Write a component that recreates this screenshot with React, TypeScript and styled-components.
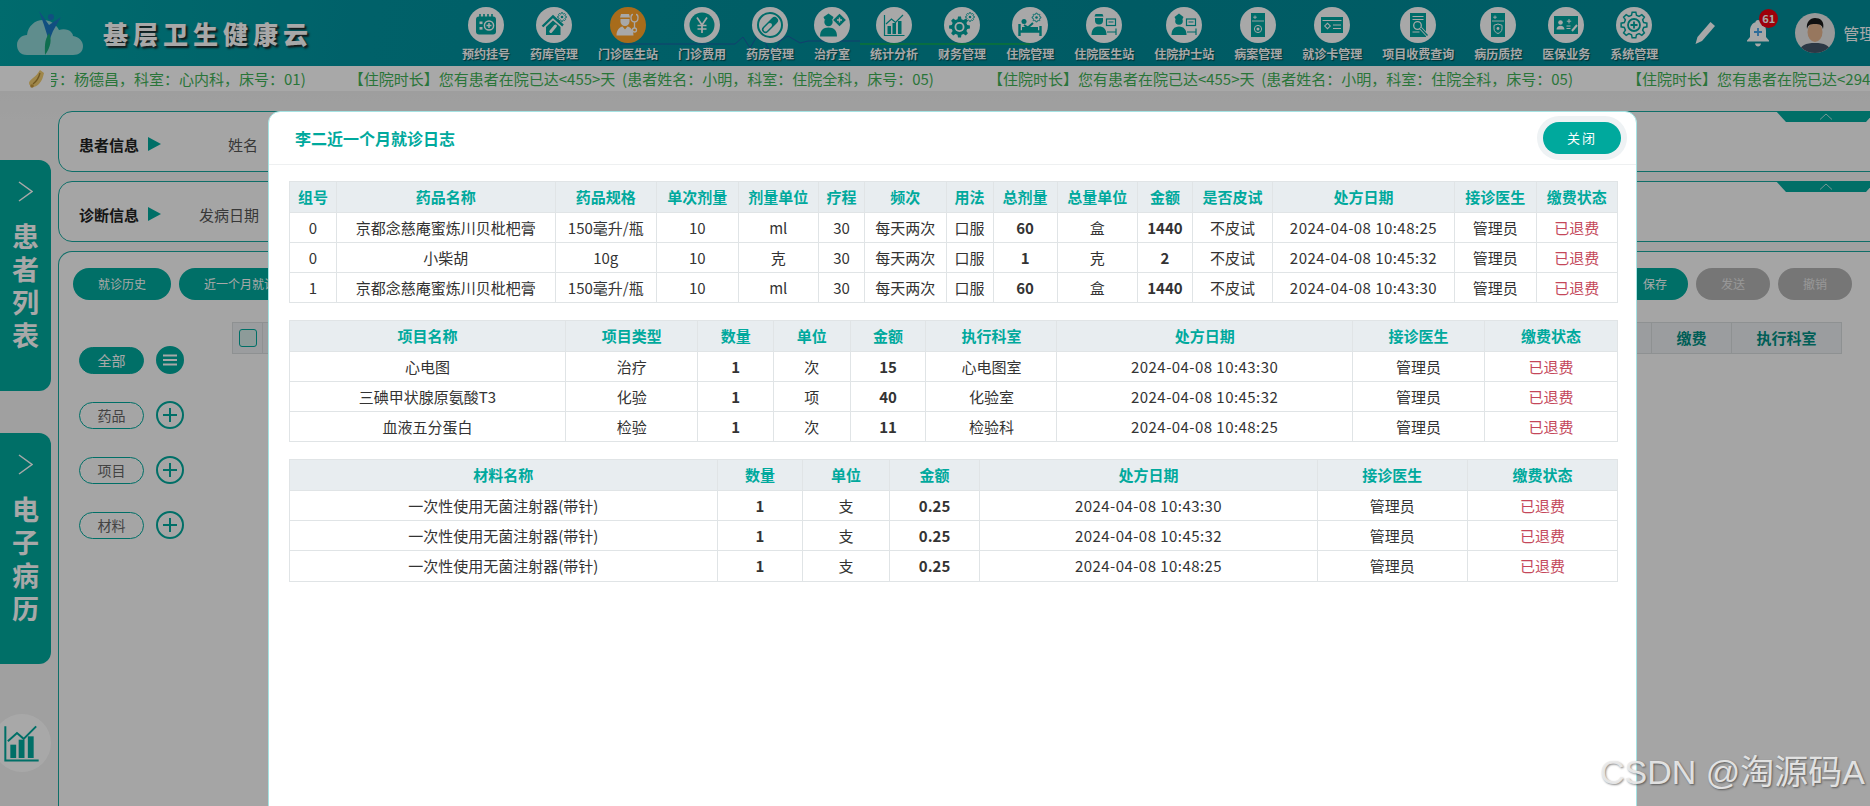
import React from 'react';
import styled, {createGlobalStyle} from 'styled-components';

const FONT = '"Noto Sans CJK SC", "Noto Sans", sans-serif';
const TEAL = '#00a99d';

const GlobalStyle = createGlobalStyle`
  html, body {
    margin: 0;
    padding: 0;
    background: #fff;
    font-family: ${FONT};
  }
  * {
    box-sizing: border-box;
  }
`;

// polygon points for a toothed wheel, the nav icons need it three times
const gearPoints = (cx: number, cy: number, outer: number, inner: number, teeth: number) => {
  const pts: string[] = [];
  const step = (Math.PI * 2) / teeth;
  for (let i = 0; i < teeth; i++) {
    const a = i * step;
    [
      [inner, a - step * 0.32],
      [outer, a - step * 0.18],
      [outer, a + step * 0.18],
      [inner, a + step * 0.32],
    ].forEach(([r, t]) => {
      pts.push(`${(cx + r * Math.cos(t)).toFixed(2)},${(cy + r * Math.sin(t)).toFixed(2)}`);
    });
  }
  return pts.join(' ');
};

const SmallGear = ({x, y}: {x: number; y: number}) => (
  <g>
    <polygon points={gearPoints(x, y, 4.4, 3.4, 8)} fill="none" stroke="currentColor" strokeWidth="0.9" />
    <circle cx={x} cy={y} r="1.3" fill="currentColor" />
  </g>
);

const CalendarGlyph = () => (
  <>
    <rect x="8" y="9.5" width="20" height="18" rx="3" fill="currentColor" />
    <path d="M12 7v4M16 7v4M20 7v4M24 7v4" stroke="currentColor" strokeWidth="1.6" />
    <rect x="11.5" y="14.5" width="3" height="2.6" fill="#fff" />
    <rect x="11.5" y="20" width="3" height="2.6" fill="#fff" />
    <circle cx="21" cy="18.5" r="4.6" fill="none" stroke="#fff" strokeWidth="1.5" />
    <path d="M21 16v5M18.5 18.5h5" stroke="#fff" strokeWidth="1.5" />
  </>
);

const HomeGlyph = () => (
  <>
    <path d="M6.5 19.5L17 9.5l10 9" fill="none" stroke="currentColor" strokeWidth="2.4" />
    <path d="M10 20l7-6.5 7.5 6.5v8H10z" fill="currentColor" />
    <path d="M14.8 24.5l4.6-5.500" stroke="#fff" strokeWidth="3" strokeLinecap="round" />
    <SmallGear x={26} y={10} />
  </>
);

const DoctorGlyph = () => (
  <>
    <path d="M10 10.5l1-3.5h8l1 3.5z" fill="currentColor" />
    <path d="M10.5 12h9v2.5a4.5 4.5 0 0 1-9 0z" fill="currentColor" />
    <path d="M6.500 28.500c0-6 3.500-8.500 6-9l2.500 3 2.500-3c2.500.5 6 3 6 9z" fill="currentColor" />
    <path
      d="M23 7.500c-1.200 0-2 1-2 3 0 3 1.800 4.500 3.500 4.500s3.500-1.500 3.500-4.500c0-2-.8-3-2-3M24.500 15v6"
      fill="none"
      stroke="currentColor"
      strokeWidth="1.3"
    />
    <circle cx="24.500" cy="23" r="2" fill="none" stroke="currentColor" strokeWidth="1.3" />
  </>
);

const YenGlyph = () => (
  <>
    <circle cx="18" cy="18" r="12.500" fill="currentColor" />
    <path d="M13 10.500l5 7.500 5-7.500M18 18v8M13.500 18.500h9M13.500 22h9" fill="none" stroke="#fff" strokeWidth="1.7" />
  </>
);

const PillGlyph = () => (
  <>
    <circle cx="18" cy="18" r="12" fill="none" stroke="currentColor" strokeWidth="2" />
    <path d="M13.500 22.500l9-9" stroke="currentColor" strokeWidth="7" strokeLinecap="round" />
    <path d="M13.500 22.500l4.500-4.500" stroke="#fff" strokeWidth="4" strokeLinecap="round" />
  </>
);

const NurseGlyph = () => (
  <>
    <path d="M9.500 10l5-3.500 5 3.500-1 2.500h-8z" fill="currentColor" />
    <circle cx="14.500" cy="15" r="4.200" fill="currentColor" />
    <path d="M6 29.500c0-6 3-9 8.500-9s8.500 3 8.500 9z" fill="currentColor" />
    <rect x="21" y="8.500" width="9" height="9" transform="rotate(45 25.500 13)" fill="currentColor" />
    <path d="M25.500 10.500v5M23 13h5" stroke="#fff" strokeWidth="1.4" />
  </>
);

const ChartGlyph = () => (
  <>
    <path d="M8.500 8v20.500H28.500" fill="none" stroke="currentColor" strokeWidth="1.200" />
    <rect x="11.500" y="19" width="3.500" height="8" fill="currentColor" />
    <rect x="16.500" y="16" width="3.500" height="11" fill="currentColor" />
    <rect x="22" y="14" width="3.500" height="13" fill="currentColor" />
    <path d="M10 17l5.500-5 4 3.500L27 8" fill="none" stroke="currentColor" strokeWidth="1.200" />
  </>
);

const FinanceGlyph = () => (
  <>
    <polygon points={gearPoints(15.5, 20, 10.5, 8, 8)} fill="currentColor" />
    <circle cx="15.500" cy="20" r="5" fill="#fff" />
    <circle cx="15.500" cy="20" r="3.200" fill="currentColor" />
    <SmallGear x={26} y={10} />
  </>
);

const BedGlyph = () => (
  <>
    <circle cx="12" cy="14.500" r="2.500" fill="currentColor" />
    <path d="M12 18l4 2.500 5-4.500" fill="none" stroke="currentColor" strokeWidth="2" />
    <path d="M7.500 17v12M28.500 19v10M7.500 24.500h21" stroke="currentColor" strokeWidth="2.400" fill="none" />
    <rect x="10" y="20" width="16" height="4" fill="currentColor" />
    <SmallGear x={24.5} y={10.5} />
  </>
);

const WardDoctorGlyph = () => (
  <>
    <path d="M8.500 9.500l1-2.500h7l1 2.500z" fill="currentColor" />
    <path d="M9 11h8v2.500a4 4 0 0 1-8 0z" fill="currentColor" />
    <path d="M5.500 28c0-6 3-8.500 7.500-8.500s7.500 2.500 7.500 8.500z" fill="currentColor" />
    <rect x="20.500" y="12" width="9" height="6.500" fill="none" stroke="currentColor" strokeWidth="1.200" />
    <path d="M22.500 15h5M21 25h9M30 21.500V28" stroke="currentColor" strokeWidth="1.200" />
  </>
);

const WardNurseGlyph = () => (
  <>
    <path d="M8.500 10l4.500-3.500 4.500 3.500-1 2h-7z" fill="currentColor" />
    <circle cx="13" cy="14" r="3.800" fill="currentColor" />
    <path d="M5.500 28c0-5 2.500-8.500 7.500-8.500s7.500 3.500 7.500 8.500z" fill="currentColor" />
    <rect x="20.500" y="12" width="9" height="6.500" fill="none" stroke="currentColor" strokeWidth="1.200" />
    <path d="M22.500 15h5M21 25h9M30 21.500V28" stroke="currentColor" strokeWidth="1.200" />
  </>
);

const RecordGlyph = () => (
  <>
    <rect x="11" y="6" width="14" height="24" fill="currentColor" />
    <path d="M15 8.500v3.500M13.200 10.200h3.600M12 14h12" stroke="#fff" strokeWidth="0.9" />
    <circle cx="18" cy="22" r="3.600" fill="none" stroke="#fff" strokeWidth="1" />
    <circle cx="18" cy="22" r="1.500" fill="#fff" />
  </>
);

const CardGlyph = () => (
  <>
    <rect x="7" y="10" width="22" height="16" fill="currentColor" />
    <path d="M8.500 13.500h19M19 18h8M19 21.500h8" stroke="#fff" strokeWidth="1" />
    <rect x="11.500" y="17" width="4" height="4" transform="rotate(45 13.500 19)" fill="none" stroke="#fff" strokeWidth="1" />
  </>
);

const SearchDocGlyph = () => (
  <>
    <rect x="10" y="6" width="16" height="24" fill="currentColor" />
    <path d="M12.500 9.500h11M12.500 12.500h11M12.500 25h7" stroke="#fff" strokeWidth="1" />
    <circle cx="17.500" cy="18.500" r="3.800" fill="none" stroke="#fff" strokeWidth="1.300" />
    <path d="M20.500 21l7 7.500" stroke="#fff" strokeWidth="3.200" />
    <path d="M20.500 21l7 7.500" stroke="currentColor" strokeWidth="1.400" />
  </>
);

const ShieldDocGlyph = () => (
  <>
    <rect x="11" y="6" width="14" height="24" fill="currentColor" />
    <path d="M15 8.500v3.500M13.200 10.200h3.600M12 14h12" stroke="#fff" strokeWidth="0.9" />
    <path d="M18 17l4 1.300v3.500c0 2.500-2 4-4 4.700-2-.7-4-2.200-4-4.700v-3.500z" fill="none" stroke="#fff" strokeWidth="1" />
    <circle cx="18" cy="21.500" r="1.400" fill="#fff" />
  </>
);

const InsuranceGlyph = () => (
  <>
    <rect x="6" y="9" width="24" height="18" fill="currentColor" />
    <circle cx="12.500" cy="15.500" r="2.300" fill="#fff" />
    <path d="M8.500 22.500c0-2.500 1.800-3.800 4-3.800s4 1.300 4 3.800z" fill="#fff" />
    <path d="M21 12v4.500M18.800 14.200h4.400M18.500 19h4M18.500 21.500h4" stroke="#fff" strokeWidth="1" />
    <path d="M24 24l5-6" stroke="#fff" strokeWidth="2" />
  </>
);

const SystemGlyph = () => (
  <>
    <polygon points={gearPoints(18, 18, 13, 10, 8)} fill="none" stroke="currentColor" strokeWidth="1.500" />
    <circle cx="18" cy="18" r="6" fill="none" stroke="currentColor" strokeWidth="1.800" />
    <path d="M18 14.500v7M14.500 18h7" stroke="currentColor" strokeWidth="1.800" />
  </>
);

const NAV_ITEMS = [
  {label: '预约挂号', glyph: CalendarGlyph},
  {label: '药库管理', glyph: HomeGlyph},
  {label: '门诊医生站', glyph: DoctorGlyph, active: true},
  {label: '门诊费用', glyph: YenGlyph},
  {label: '药房管理', glyph: PillGlyph},
  {label: '治疗室', glyph: NurseGlyph},
  {label: '统计分析', glyph: ChartGlyph},
  {label: '财务管理', glyph: FinanceGlyph},
  {label: '住院管理', glyph: BedGlyph},
  {label: '住院医生站', glyph: WardDoctorGlyph},
  {label: '住院护士站', glyph: WardNurseGlyph},
  {label: '病案管理', glyph: RecordGlyph},
  {label: '就诊卡管理', glyph: CardGlyph},
  {label: '项目收费查询', glyph: SearchDocGlyph},
  {label: '病历质控', glyph: ShieldDocGlyph},
  {label: '医保业务', glyph: InsuranceGlyph},
  {label: '系统管理', glyph: SystemGlyph},
];

const TICKER_ITEMS = [
  '【住院时长】您有患者在院已达<455>天  (患者姓名：小明，科室：住院全科，床号：05)',
  '【住院时长】您有患者在院已达<455>天  (患者姓名：小明，科室：住院全科，床号：05)',
  '【住院时长】您有患者在院已达<294>天  (患者姓名：杨德昌，科室：心内科，床号：01)',
];

interface Column {
  title: string;
  width: number;
  bold?: boolean;
  status?: boolean;
  date?: boolean;
}

const DRUG_COLUMNS: Column[] = [
  {title: '组号', width: 47},
  {title: '药品名称', width: 218.5},
  {title: '药品规格', width: 101.5},
  {title: '单次剂量', width: 81.6},
  {title: '剂量单位', width: 80.4},
  {title: '疗程', width: 46},
  {title: '频次', width: 81.6},
  {title: '用法', width: 47},
  {title: '总剂量', width: 64, bold: true},
  {title: '总量单位', width: 80.4},
  {title: '金额', width: 55, bold: true},
  {title: '是否皮试', width: 80},
  {title: '处方日期', width: 182, date: true},
  {title: '接诊医生', width: 81.6},
  {title: '缴费状态', width: 81.4, status: true},
];

const CITY_DRUG = '京都念慈庵蜜炼川贝枇杷膏';
const DRUG_ROWS = [
  ['0', CITY_DRUG, '150毫升/瓶', '10', 'ml', '30', '每天两次', '口服', '60', '盒', '1440', '不皮试', '2024-04-08 10:48:25', '管理员', '已退费'],
  ['0', '小柴胡', '10g', '10', '克', '30', '每天两次', '口服', '1', '克', '2', '不皮试', '2024-04-08 10:45:32', '管理员', '已退费'],
  ['1', CITY_DRUG, '150毫升/瓶', '10', 'ml', '30', '每天两次', '口服', '60', '盒', '1440', '不皮试', '2024-04-08 10:43:30', '管理员', '已退费'],
];

const ITEM_COLUMNS: Column[] = [
  {title: '项目名称', width: 276},
  {title: '项目类型', width: 132.4},
  {title: '数量', width: 75.6, bold: true},
  {title: '单位', width: 76.6},
  {title: '金额', width: 75.9, bold: true},
  {title: '执行科室', width: 131},
  {title: '处方日期', width: 295.4, date: true},
  {title: '接诊医生', width: 132.5},
  {title: '缴费状态', width: 132.5, status: true},
];

const ITEM_ROWS = [
  ['心电图', '治疗', '1', '次', '15', '心电图室', '2024-04-08 10:43:30', '管理员', '已退费'],
  ['三碘甲状腺原氨酸T3', '化验', '1', '项', '40', '化验室', '2024-04-08 10:45:32', '管理员', '已退费'],
  ['血液五分蛋白', '检验', '1', '次', '11', '检验科', '2024-04-08 10:48:25', '管理员', '已退费'],
];

const MATERIAL_COLUMNS: Column[] = [
  {title: '材料名称', width: 427.7},
  {title: '数量', width: 85.7, bold: true},
  {title: '单位', width: 86.3},
  {title: '金额', width: 90.8, bold: true},
  {title: '处方日期', width: 337.1, date: true},
  {title: '接诊医生', width: 150.4},
  {title: '缴费状态', width: 149.9, status: true},
];

const SYRINGE = '一次性使用无菌注射器(带针)';
const MATERIAL_ROWS = [
  [SYRINGE, '1', '支', '0.25', '2024-04-08 10:43:30', '管理员', '已退费'],
  [SYRINGE, '1', '支', '0.25', '2024-04-08 10:45:32', '管理员', '已退费'],
  [SYRINGE, '1', '支', '0.25', '2024-04-08 10:48:25', '管理员', '已退费'],
];

const FILTERS = [
  {label: '全部', solid: true},
  {label: '药品'},
  {label: '项目'},
  {label: '材料'},
];

const DataTable = ({columns, rows}: {columns: Column[]; rows: string[][]}) => (
  <Grid>
    <colgroup>
      {columns.map((col) => (
        <col key={col.title} width={col.width} />
      ))}
    </colgroup>
    <thead>
      <tr>
        {columns.map((col) => (
          <HeadCell key={col.title}>{col.title}</HeadCell>
        ))}
      </tr>
    </thead>
    <tbody>
      {rows.map((row, r) => (
        <tr key={r}>
          {row.map((text, c) => (
            <BodyCell key={c} $bold={columns[c].bold} $status={columns[c].status} $date={columns[c].date}>
              {text}
            </BodyCell>
          ))}
        </tr>
      ))}
    </tbody>
  </Grid>
);

const Chevron = () => (
  <TabChevron viewBox="0 0 15 21">
    <path d="M1 1l13 9.500L1 20" fill="none" stroke="currentColor" strokeWidth="1.500" />
  </TabChevron>
);

const CollapseTab = () => (
  <Notch>
    <svg width="14" height="7" viewBox="0 0 14 7">
      <path d="M1 6.500L7 1l6 5.500" fill="none" stroke="#fff" strokeWidth="1" opacity="0.7" />
    </svg>
  </Notch>
);

export default function App() {
  return (
    <Page>
      <GlobalStyle />
      <Header>
        <HeaderTrace viewBox="0 0 1870 66">
          <path d="M620 44H735l8-7 7 11 10-17 12 26 8-16 8-5 12 7 8-2H860" fill="none" stroke="#1d5fa8" strokeWidth="1" />
          <path d="M860 44H1030" stroke="#10b050" strokeWidth="1.500" />
        </HeaderTrace>
        <Logo width="66" height="44" viewBox="0 0 66 44">
          <path
            d="M10 44C3 44 0 39 0 34c0-6 5-10 10-10 1-9 8-15 16-15 7 0 13 4 16 10 3-1 6-1 9 0 3 1 5 4 5 6 6 1 10 5 10 10 0 6-4 9-10 9z"
            fill="#b5e4e4"
            opacity="0.8"
          />
          <path d="M22 0l10 14L44 6 36 20 32 30 27 14z" fill="#1a78c2" />
          <circle cx="34" cy="6" r="3" fill="#1a78c2" />
          <path d="M32 22c3 6 2 14-4 22 0-8-1-14 4-22z" fill="#18a878" />
        </Logo>
        <Brand>基层卫生健康云</Brand>
        <Nav>
          {NAV_ITEMS.map(({label, glyph: Glyph, active}) => (
            <NavItem key={label}>
              <NavIcon $active={active}>
                <svg width="36" height="36" viewBox="0 0 36 36">
                  <Glyph />
                </svg>
              </NavIcon>
              <NavLabel>{label}</NavLabel>
            </NavItem>
          ))}
        </Nav>
        <UserArea>
          <svg width="22" height="24" viewBox="0 0 22 24">
            <path d="M16.500 1l4.500 4-13 15-6.500 3 2-7z" fill="#fff" />
          </svg>
          <BellWrap>
            <svg width="24" height="30" viewBox="0 0 24 30">
              <path d="M12 2c1.500 0 2.500 1 2.500 2.200C18.500 5.500 20 9 20 13v6l3 3.500v1H1v-1L4 19v-6c0-4 1.500-7.500 5.500-8.800C9.500 3 10.500 2 12 2z" fill="#fff" />
              <path d="M9 25.500h6c-.3 1.800-1.500 3-3 3s-2.700-1.200-3-3z" fill="#fff" />
              <path d="M12 10v8M8 14h8" stroke="#45a4ea" strokeWidth="1.800" />
            </svg>
            <Badge>61</Badge>
          </BellWrap>
          <Avatar viewBox="0 0 40 40">
            <rect width="40" height="40" fill="#e8e8e8" />
            <path d="M4 40c1-8 7-10 16-10s15 2 16 10z" fill="#43556a" />
            <ellipse cx="20" cy="19" rx="7.500" ry="10" fill="#e6b58f" />
            <path d="M12 16c-1-7 3-11 8-11s10 3 8 11c-1-4-3-5-8-5s-7 1-8 5z" fill="#1b1b1b" />
          </Avatar>
          <UserName>管理员</UserName>
        </UserArea>
      </Header>

      <Ticker>
        <TickerIcon width="17" height="20" viewBox="0 0 17 20">
          <path d="M12 1l4 3c-1 4-2 8-5 11-2 2-4 3-6 3-2 0-4-2-4-4 0-2 2-3 4-5 3-2 5-5 7-8z" fill="#f2cd72" />
          <path d="M12 4c-1 4-3 8-7 11" stroke="#a98434" strokeWidth="1.300" fill="none" />
          <circle cx="4" cy="17" r="1.800" fill="#c99a3e" />
        </TickerIcon>
        <TickerClip>
          <TickerTrack>
            <TickerFirst>号：杨德昌，科室：心内科，床号：01)</TickerFirst>
            {TICKER_ITEMS.map((text, i) => (
              <TickerText key={i}>{text}</TickerText>
            ))}
          </TickerTrack>
        </TickerClip>
      </Ticker>

      <Main>
        <Sidebar>
          <SideTab>
            <Chevron />
            <SideTabText>患者列表</SideTabText>
          </SideTab>
          <SideTab>
            <Chevron />
            <SideTabText>电子病历</SideTabText>
          </SideTab>
          <StatsButton>
            <svg width="40" height="40" viewBox="7 6 23 24">
              <ChartGlyph />
            </svg>
          </StatsButton>
        </Sidebar>
        <Content>
          <InfoCard>
            <InfoTitle>患者信息</InfoTitle>
            <InfoArrow />
            <InfoField>姓名</InfoField>
            <CollapseTab />
          </InfoCard>
          <InfoCard>
            <InfoTitle>诊断信息</InfoTitle>
            <InfoArrow />
            <InfoFieldNear>发病日期</InfoFieldNear>
            <CollapseTab />
          </InfoCard>
          <WorkCard>
            <ActionRow>
              <ActionGroup>
                <ActionButton $w={98}>就诊历史</ActionButton>
                <ActionButton $w={146}>近一个月就诊日志</ActionButton>
              </ActionGroup>
              <ActionGroup>
                <ActionButton $w={66}>保存</ActionButton>
                <ActionButton $w={74} $muted>发送</ActionButton>
                <ActionButton $w={74} $muted>撤销</ActionButton>
              </ActionGroup>
            </ActionRow>
            <WorkBody>
              <FilterList>
                {FILTERS.map((f) => (
                  <FilterRow key={f.label}>
                    <FilterPill $solid={f.solid}>{f.label}</FilterPill>
                    <FilterRound $solid={f.solid}>
                      <svg width="18" height="18" viewBox="0 0 18 18">
                        <path
                          d={f.solid ? 'M2 4.500h14M2 9h14M2 13.500h14' : 'M9 2v14M2 9h14'}
                          stroke={f.solid ? '#fff' : TEAL}
                          strokeWidth="2"
                        />
                      </svg>
                    </FilterRound>
                  </FilterRow>
                ))}
              </FilterList>
              <OrderHead>
                <CheckCell>
                  <CheckBox />
                </CheckCell>
                <OrderSpacer />
                <OrderCell $w={80}>缴费</OrderCell>
                <OrderCell $w={110}>执行科室</OrderCell>
              </OrderHead>
            </WorkBody>
          </WorkCard>
        </Content>
      </Main>

      <Overlay>
        <Modal>
          <ModalHead>
            <ModalTitle>李二近一个月就诊日志</ModalTitle>
            <CloseButton>关闭</CloseButton>
          </ModalHead>
          <ModalBody>
            <DataTable columns={DRUG_COLUMNS} rows={DRUG_ROWS} />
            <DataTable columns={ITEM_COLUMNS} rows={ITEM_ROWS} />
            <DataTable columns={MATERIAL_COLUMNS} rows={MATERIAL_ROWS} />
          </ModalBody>
        </Modal>
      </Overlay>
      <Watermark>CSDN @淘源码A</Watermark>
    </Page>
  );
}

const Page = styled.div`
  position: relative;
  width: 1870px;
  height: 806px;
  overflow: hidden;
  display: flex;
  flex-direction: column;
  background: linear-gradient(#e6e6e6, #f3f3f3 120px);
`;

const Header = styled.header`
  position: relative;
  flex: none;
  height: 66px;
  padding-left: 17px;
  display: flex;
  align-items: center;
  background: linear-gradient(100deg, #00a3a6 0%, #0093a0 20%, #008b98 60%, #008e9a 100%);
`;

const HeaderTrace = styled.svg`
  position: absolute;
  inset: 0;
  width: 1870px;
  height: 66px;
`;

const Logo = styled.svg`
  position: relative;
  flex: none;
`;

const Brand = styled.div`
  position: relative;
  flex: none;
  margin-left: 20px;
  width: 210px;
  font-size: 25px;
  font-weight: 900;
  letter-spacing: 5px;
  line-height: 30px;
  white-space: nowrap;
  color: #fff;
  text-shadow: 2px 2px 2px #222;
`;

const Nav = styled.nav`
  position: relative;
  flex: none;
  margin-left: 149px;
  align-self: flex-start;
  padding-top: 7px;
  display: flex;
  gap: 20px;
`;

const NavItem = styled.div`
  display: flex;
  flex-direction: column;
  align-items: center;
`;

const NavIcon = styled.div<{$active?: boolean}>`
  width: 36px;
  height: 36px;
  border-radius: 50%;
  background: ${(p) => (p.$active ? '#ffa52a' : '#fff')};
  color: ${(p) => (p.$active ? '#fff' : '#00a4a0')};
  svg {
    display: block;
  }
`;

const NavLabel = styled.div`
  margin-top: 5px;
  font-size: 12px;
  line-height: 12px;
  font-weight: 700;
  white-space: nowrap;
  color: #fff;
  text-shadow: 1px 1px 1px rgba(0, 0, 0, 0.5);
`;

const UserArea = styled.div`
  position: relative;
  flex: none;
  margin-left: 36px;
  display: flex;
  align-items: center;
  gap: 30px;
`;

const BellWrap = styled.div`
  position: relative;
  width: 24px;
  height: 30px;
  margin-right: -5px;
`;

const Badge = styled.span`
  position: absolute;
  top: -9px;
  left: 13px;
  width: 19px;
  height: 19px;
  border-radius: 50%;
  background: #f00010;
  color: #fff;
  font-size: 11px;
  font-weight: 700;
  line-height: 19px;
  text-align: center;
`;

const Avatar = styled.svg`
  flex: none;
  width: 40px;
  height: 40px;
  border-radius: 50%;
`;

const UserName = styled.span`
  margin-left: -22px;
  font-size: 16px;
  color: #fff;
  white-space: nowrap;
`;

const Ticker = styled.div`
  flex: none;
  height: 25px;
  padding-left: 28px;
  display: flex;
  align-items: center;
  background: #fff;
`;

const TickerIcon = styled.svg`
  flex: none;
  margin-right: 6px;
`;

const TickerClip = styled.div`
  flex: 1;
  min-width: 0;
  overflow: hidden;
`;

const TickerTrack = styled.div`
  display: flex;
  gap: 54px;
  font-size: 15px;
  line-height: 25px;
  white-space: pre;
  color: #3fb257;
`;

const TickerFirst = styled.span`
  margin-left: -7px;
  margin-right: -11px;
`;

const TickerText = styled.span``;

const Main = styled.main`
  flex: 1;
  min-height: 0;
  display: flex;
`;

const Sidebar = styled.aside`
  flex: none;
  width: 51px;
  padding-top: 69px;
  display: flex;
  flex-direction: column;
  gap: 42px;
`;

const SideTab = styled.div`
  height: 231px;
  padding-top: 21px;
  display: flex;
  flex-direction: column;
  align-items: center;
  border-radius: 0 12px 12px 0;
  background: ${TEAL};
  color: #fff;
`;

const TabChevron = styled.svg`
  flex: none;
  width: 15px;
  height: 21px;
`;

const SideTabText = styled.div`
  margin-top: 17px;
  width: 27px;
  font-size: 27px;
  line-height: 33px;
  font-weight: 700;
`;

const StatsButton = styled.div`
  margin: 8px 0 0 -7px;
  width: 58px;
  height: 58px;
  border-radius: 50%;
  background: #fff;
  color: ${TEAL};
  display: flex;
  align-items: center;
  justify-content: center;
`;

const Content = styled.div`
  flex: none;
  width: 1832px;
  margin-left: 7px;
  padding-top: 20px;
  display: flex;
  flex-direction: column;
  gap: 9px;
`;

const InfoCard = styled.section`
  position: relative;
  flex: none;
  height: 61px;
  padding: 5px 0 0 20px;
  display: flex;
  align-items: center;
  border: 1px solid #17a89e;
  border-radius: 14px;
  background: #fbfbfb;
`;

const InfoTitle = styled.div`
  font-size: 15px;
  font-weight: 700;
  color: #222;
`;

const InfoArrow = styled.span`
  margin-left: 9px;
  width: 0;
  height: 0;
  border-left: 13px solid ${TEAL};
  border-top: 7px solid transparent;
  border-bottom: 7px solid transparent;
`;

const InfoField = styled.div`
  margin-left: 67px;
  font-size: 15px;
  color: #555;
`;

const InfoFieldNear = styled(InfoField)`
  margin-left: 38px;
`;

const Notch = styled.div`
  position: absolute;
  top: -1px;
  left: 1717px;
  width: 100px;
  height: 11px;
  display: flex;
  align-items: flex-start;
  justify-content: center;
  padding-top: 2px;
  background: ${TEAL};
  clip-path: polygon(0 0, 100% 0, calc(100% - 10px) 100%, 10px 100%);
`;

const WorkCard = styled.section`
  flex: 1;
  min-height: 0;
  padding: 16px 37px 0 14px;
  border: 1px solid #17a89e;
  border-bottom: 0;
  border-radius: 14px 14px 0 0;
  background: #fbfbfb;
`;

const ActionRow = styled.div`
  display: flex;
  justify-content: space-between;
`;

const ActionGroup = styled.div`
  display: flex;
  gap: 8px;
`;

const ActionButton = styled.div<{$w: number; $muted?: boolean}>`
  width: ${(p) => p.$w}px;
  height: 32px;
  border-radius: 16px;
  background: ${(p) => (p.$muted ? '#b4b4b4' : TEAL)};
  color: ${(p) => (p.$muted ? '#e6e6e6' : '#fff')};
  font-size: 12px;
  line-height: 32px;
  text-align: center;
`;

const WorkBody = styled.div`
  display: flex;
  align-items: flex-start;
`;

const FilterList = styled.div`
  flex: none;
  width: 159px;
  margin-top: 46px;
  padding-left: 6px;
  display: flex;
  flex-direction: column;
  gap: 27px;
`;

const FilterRow = styled.div`
  display: flex;
  align-items: center;
  gap: 12px;
`;

const FilterPill = styled.div<{$solid?: boolean}>`
  width: 65px;
  height: 27px;
  border-radius: 14px;
  border: 1px solid ${TEAL};
  background: ${(p) => (p.$solid ? TEAL : 'transparent')};
  color: ${(p) => (p.$solid ? '#fff' : '#666')};
  font-size: 14px;
  line-height: 25px;
  text-align: center;
`;

const FilterRound = styled.div<{$solid?: boolean}>`
  width: 28px;
  height: 28px;
  border-radius: 50%;
  border: 2px solid ${TEAL};
  background: ${(p) => (p.$solid ? TEAL : 'transparent')};
  display: flex;
  align-items: center;
  justify-content: center;
`;

const OrderHead = styled.div`
  flex: 1;
  margin: 22px 10px 0 0;
  height: 32px;
  display: flex;
  border: 1px solid #d8dcde;
  background: #eceff1;
`;

const CheckCell = styled.div`
  flex: none;
  width: 30px;
  display: flex;
  align-items: center;
  justify-content: center;
  border-right: 1px solid #d8dcde;
`;

const CheckBox = styled.span`
  width: 18px;
  height: 18px;
  border: 1px solid ${TEAL};
  border-radius: 3px;
  background: #d6ece8;
`;

const OrderSpacer = styled.div`
  flex: 1;
`;

const OrderCell = styled.div<{$w: number}>`
  flex: none;
  width: ${(p) => p.$w}px;
  border-left: 1px solid #d8dcde;
  color: #008f85;
  font-size: 15px;
  font-weight: 700;
  line-height: 30px;
  text-align: center;
`;

const Overlay = styled.div`
  position: absolute;
  inset: 0;
  padding: 111px 0 0 268px;
  background: rgba(0, 0, 0, 0.34);
`;

const Modal = styled.div`
  width: 1369px;
  height: 740px;
  border: 1px solid #a5e3e3;
  border-radius: 12px;
  background: #fff;
`;

const ModalHead = styled.div`
  height: 53px;
  padding: 0 15px 0 26px;
  display: flex;
  align-items: center;
  justify-content: space-between;
  border-bottom: 1px solid #eef0f1;
`;

const ModalTitle = styled.div`
  font-size: 16px;
  font-weight: 700;
  color: ${TEAL};
`;

const CloseButton = styled.div`
  width: 78px;
  height: 32px;
  border-radius: 16px;
  background: ${TEAL};
  box-shadow: 0 0 0 6px #eef2f4;
  color: #fff;
  font-size: 13px;
  letter-spacing: 2px;
  line-height: 32px;
  text-align: center;
`;

const ModalBody = styled.div`
  padding: 16px 0 0 20px;
  display: flex;
  flex-direction: column;
  gap: 17px;
`;

const Grid = styled.table`
  width: 1327px;
  table-layout: fixed;
  border-collapse: collapse;
  &:last-child tbody tr:last-child td {
    height: 31px;
  }
`;

const HeadCell = styled.th`
  height: 31px;
  padding: 0 0 1px;
  border: 1px solid #e0e4e6;
  background: #e8edf0;
  color: ${TEAL};
  font-size: 15px;
  font-weight: 700;
  text-align: center;
  white-space: nowrap;
`;

const BodyCell = styled.td<{$bold?: boolean; $status?: boolean; $date?: boolean}>`
  height: 30px;
  padding: 0 0 1px;
  border: 1px solid #e0e4e6;
  color: ${(p) => (p.$status ? '#c4475a' : '#333')};
  font-size: 15px;
  font-weight: ${(p) => (p.$bold ? 700 : 400)};
  letter-spacing: ${(p) => (p.$date ? '0.45px' : '0')};
  text-align: center;
  white-space: nowrap;
`;

const Watermark = styled.div`
  position: absolute;
  right: 5px;
  bottom: 13px;
  font-family: "Liberation Sans", ${FONT};
  font-size: 34px;
  line-height: 42px;
  color: rgba(236, 236, 236, 0.92);
  text-shadow: 1px 1px 2px rgba(0, 0, 0, 0.45);
  white-space: nowrap;
`;
